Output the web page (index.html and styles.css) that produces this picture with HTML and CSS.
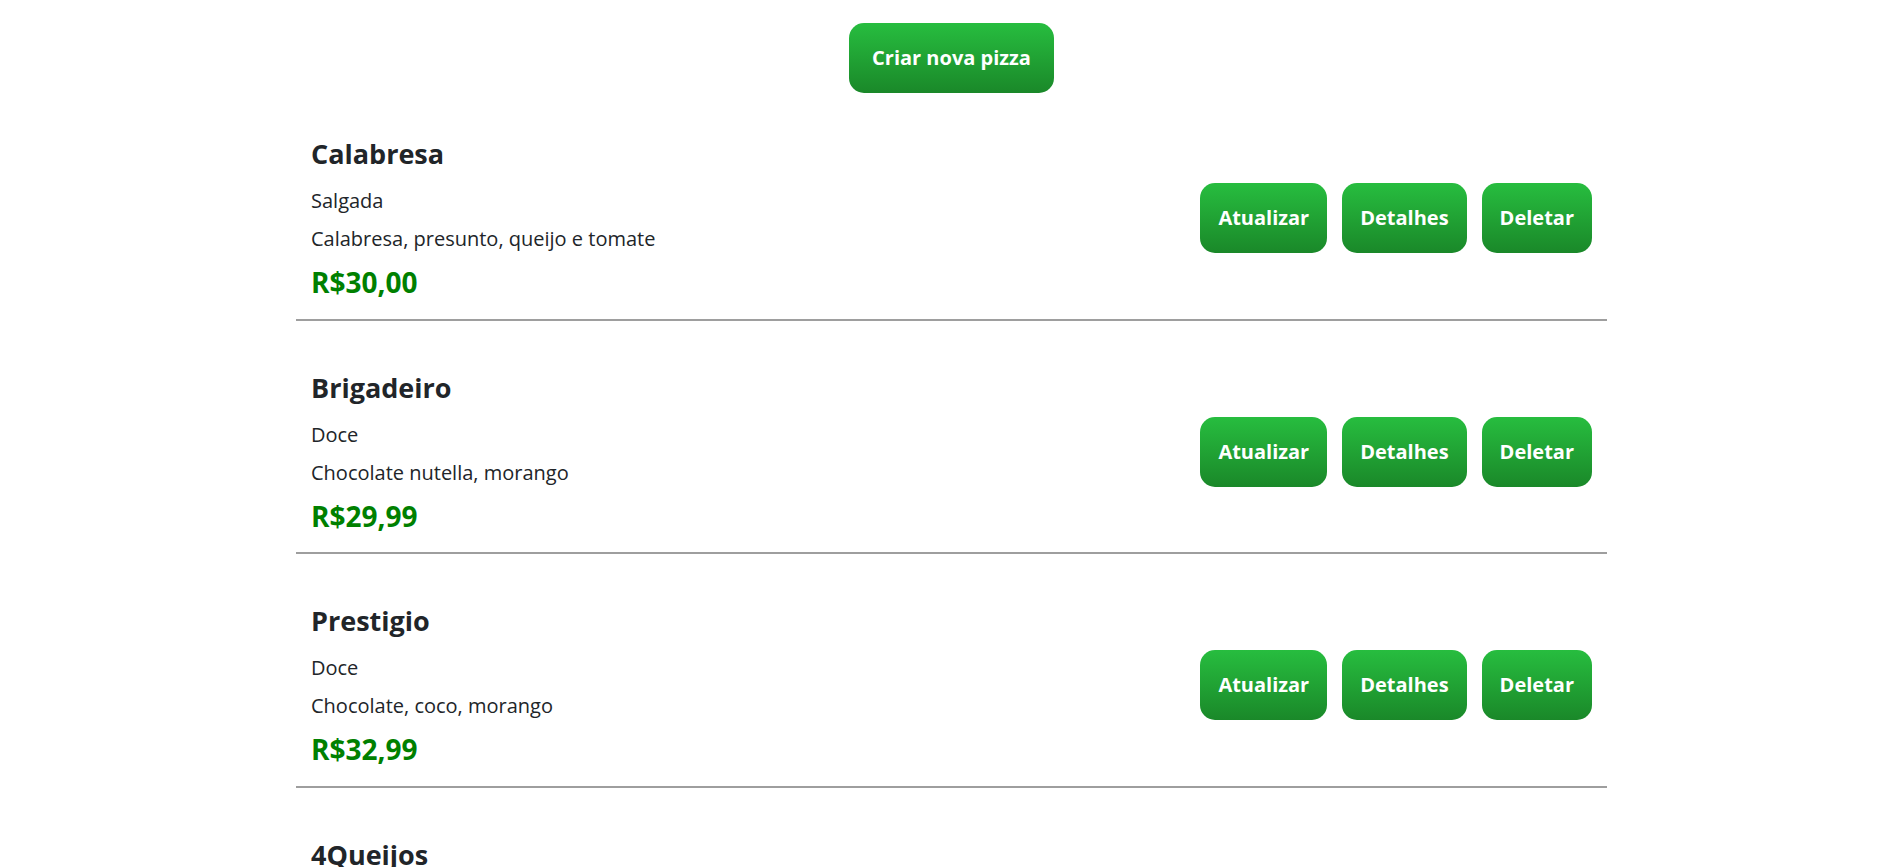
FILE: index.html
```html
<!DOCTYPE html>
<html lang="pt-BR">
<head>
<meta charset="utf-8">
<title>Pizzas</title>
<link rel="stylesheet" href="styles.css">
</head>
<body>
<div class="top">
  <button class="btn btn-create">Criar nova pizza</button>
</div>
<main class="list">
  <section class="card">
    <div class="info">
      <h3 class="name">Calabresa</h3>
      <p class="type">Salgada</p>
      <p class="desc">Calabresa, presunto, queijo e tomate</p>
      <p class="price">R$30,00</p>
    </div>
    <div class="actions">
      <button class="btn">Atualizar</button>
      <button class="btn">Detalhes</button>
      <button class="btn">Deletar</button>
    </div>
  </section>
  <section class="card">
    <div class="info">
      <h3 class="name">Brigadeiro</h3>
      <p class="type">Doce</p>
      <p class="desc">Chocolate nutella, morango</p>
      <p class="price">R$29,99</p>
    </div>
    <div class="actions">
      <button class="btn">Atualizar</button>
      <button class="btn">Detalhes</button>
      <button class="btn">Deletar</button>
    </div>
  </section>
  <section class="card">
    <div class="info">
      <h3 class="name">Prestigio</h3>
      <p class="type">Doce</p>
      <p class="desc">Chocolate, coco, morango</p>
      <p class="price">R$32,99</p>
    </div>
    <div class="actions">
      <button class="btn">Atualizar</button>
      <button class="btn">Detalhes</button>
      <button class="btn">Deletar</button>
    </div>
  </section>
  <section class="card">
    <div class="info">
      <h3 class="name">4Queijos</h3>
      <p class="type">Salgada</p>
      <p class="desc">Mussarela, provolone, parmesão e gorgonzola</p>
      <p class="price">R$34,99</p>
    </div>
    <div class="actions">
      <button class="btn">Atualizar</button>
      <button class="btn">Detalhes</button>
      <button class="btn">Deletar</button>
    </div>
  </section>
</main>
</body>
</html>
```
FILE: styles.css
```css
* { box-sizing: border-box; }

body {
  margin: 0;
  font-family: "Open Sans", "Noto Sans", sans-serif;
  color: #212529;
  background: #fff;
}

.top {
  display: flex;
  justify-content: center;
  padding-top: 23px;
}

.btn {
  font-family: inherit;
  font-size: 20px;
  font-weight: 700;
  line-height: 30px;
  color: #fff;
  border: none;
  border-radius: 15px;
  padding: 20px 18px;
  background: linear-gradient(to bottom, #27bd3f, #1a8829);
  cursor: pointer;
}

.btn-create {
  padding: 20px 23px;
}

.list {
  width: 1311px;
  margin: 0 auto;
}

.card {
  display: flex;
  align-items: center;
  justify-content: space-between;
  padding: 50px 15px 19px;
  border-bottom: 2px solid #9e9e9e;
}

.card:first-child {
  padding-top: 44px;
}

.info {
  display: flex;
  flex-direction: column;
}

.name {
  margin: 0 0 15px;
  font-size: 27px;
  font-weight: 700;
  line-height: 34px;
}

.type, .desc {
  margin: 0 0 8px;
  font-size: 20px;
  line-height: 30px;
}

.desc {
  margin-bottom: 12px;
}

.price {
  margin: 0;
  font-size: 28px;
  font-weight: 700;
  line-height: 1.2;
  color: #008000;
}

.actions {
  display: flex;
  gap: 15px;
}
```
